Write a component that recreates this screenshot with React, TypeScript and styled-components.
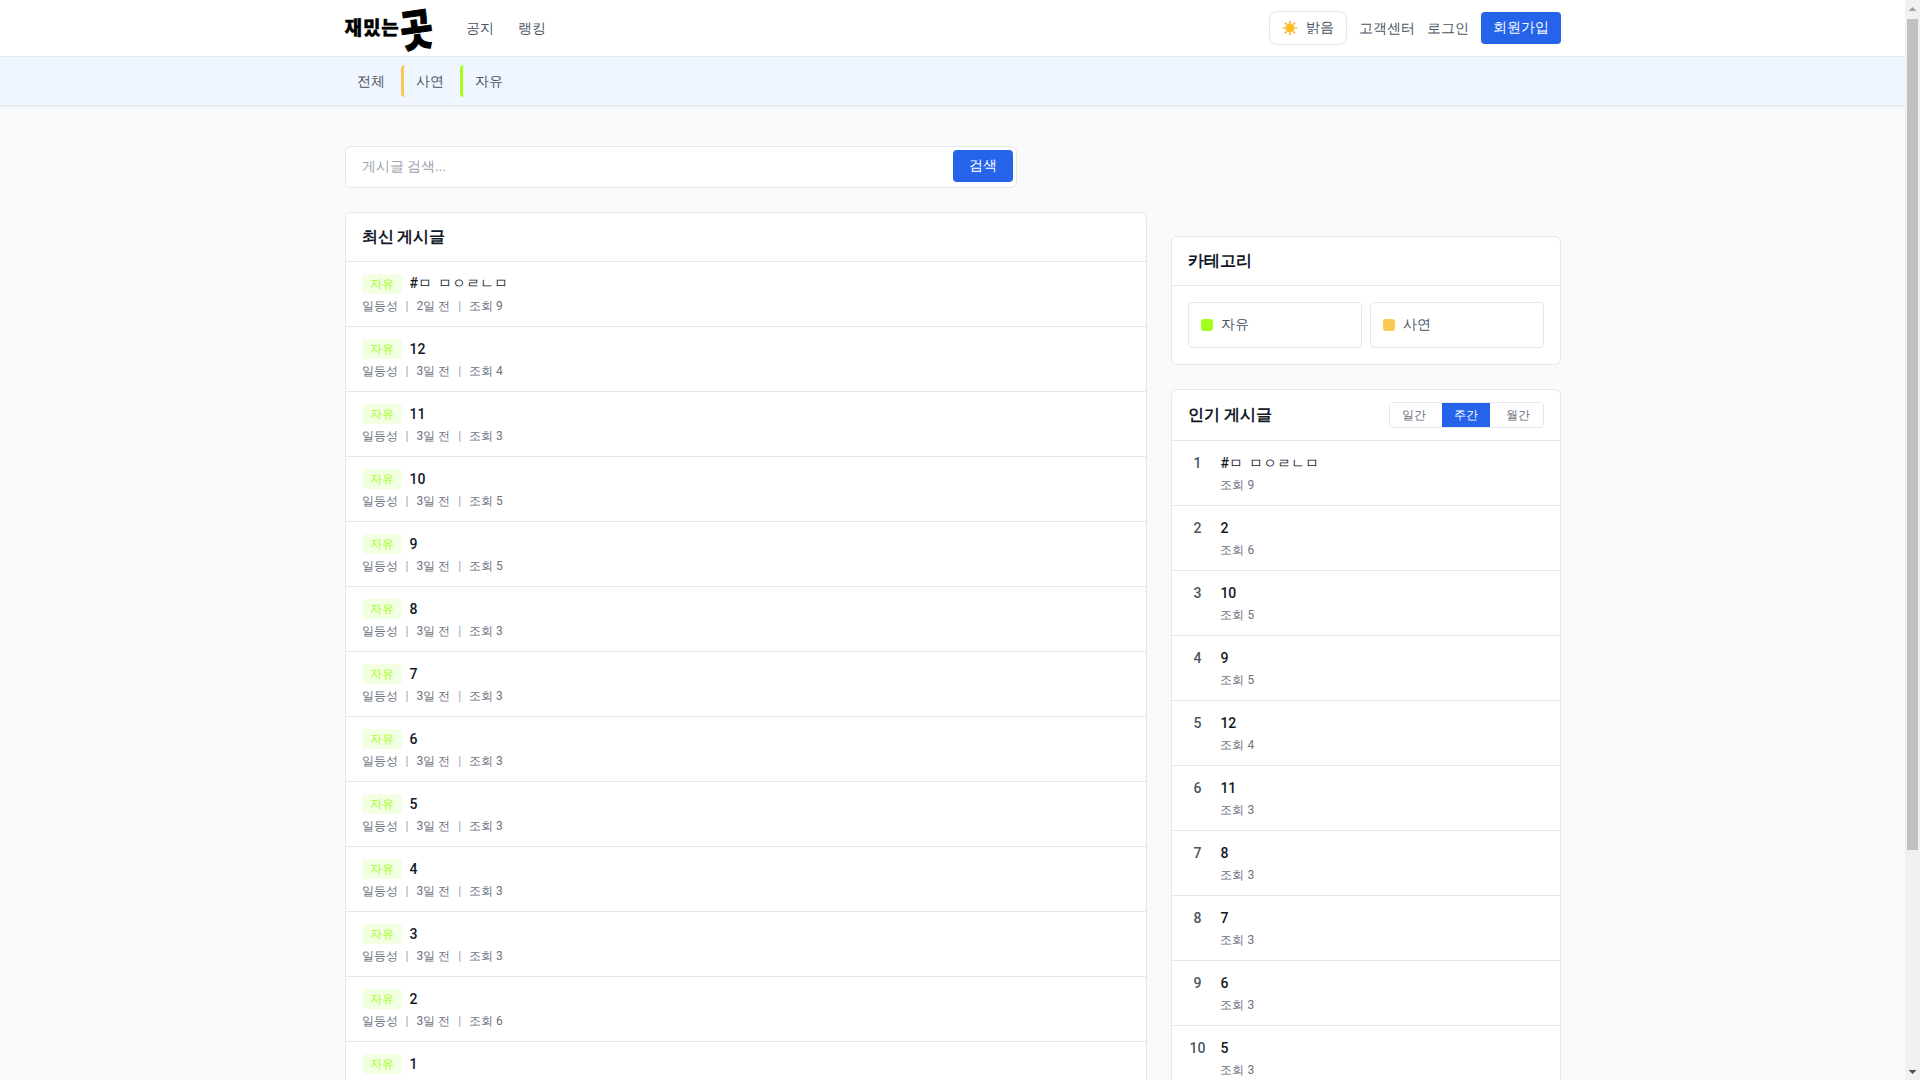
import React from "react";
import styled, { createGlobalStyle } from "styled-components";

const GlobalStyle = createGlobalStyle`
  * { box-sizing: border-box; }
  html, body { margin: 0; padding: 0; height: 100%; overflow: hidden; }
  body {
    background: #f9fafb;
    color: #111827;
    font-family: Roboto, sans-serif;
    font-size: 14px;
  }
`;

const Viewport = styled.div`
  display: flex;
  height: 100vh;
`;

const Scroller = styled.div`
  flex: 1;
  min-width: 0;
  overflow: hidden;
`;

const ScrollRail = styled.div`
  display: flex;
  flex-direction: column;
  width: 15px;
  background: #f1f1f1;
`;

const RailArrow = styled.svg`
  flex: none;
  display: block;
  width: 15px;
  height: 17px;
`;

const RailThumb = styled.div`
  width: 11px;
  height: 831px;
  margin: 2px 2px 0;
  background: #c1c1c1;
`;

const RailSpacer = styled.div`
  flex: 1;
`;

const Page = styled.div`
  background: #f9fafb;
`;

const Container = styled.div`
  width: 100%;
  max-width: 1280px;
  margin: 0 auto;
  padding: 0 32px;
`;

const TopBar = styled.header`
  height: 57px;
  background: #ffffff;
  border-bottom: 1px solid #e5e7eb;
`;

const TopInner = styled(Container)`
  display: flex;
  align-items: center;
  justify-content: space-between;
  height: 56px;
`;

const LeftGroup = styled.div`
  display: flex;
  align-items: center;
`;

const Logo = styled.a`
  display: flex;
  align-items: center;
  height: 44px;
  margin-bottom: 3px;
  color: #000000;
  font-family: "Noto Sans CJK KR", sans-serif;
  font-weight: 900;
  white-space: nowrap;
`;

const LogoSmall = styled.span`
  font-size: 19px;
  letter-spacing: 0.9px;
  -webkit-text-stroke: 0.3px #000000;
`;

const LogoBig = styled.span`
  font-size: 44px;
  line-height: 44px;
  margin-left: -4px;
  margin-right: -4px;
  -webkit-text-stroke: 1px #000000;
  transform: rotate(-8deg) scaleX(0.8);
  transform-origin: 50% 50%;
`;

const MainNav = styled.nav`
  display: flex;
  gap: 24px;
  margin-left: 34px;
`;

const NavLink = styled.a`
  color: #4b5563;
  font-size: 14px;
  line-height: 20px;
`;

const RightGroup = styled.div`
  display: flex;
  align-items: center;
  gap: 12px;
`;

const ThemeButton = styled.button`
  display: flex;
  align-items: center;
  gap: 8px;
  height: 34px;
  padding: 0 12px;
  background: #ffffff;
  border: 1px solid #e5e7eb;
  border-radius: 8px;
  color: #4b5563;
  font: inherit;
  font-size: 14px;
`;

const SignUp = styled.button`
  height: 32px;
  padding: 0 12px;
  background: #2563eb;
  border: 0;
  border-radius: 4px;
  color: #ffffff;
  font: inherit;
  font-size: 14px;
`;

const SubBar = styled.div`
  height: 49px;
  background: #eff6ff;
  border-bottom: 1px solid #e5e7eb;
  box-shadow: 0 1px 2px rgba(0, 0, 0, 0.05);
`;

const SubInner = styled(Container)`
  display: flex;
  align-items: center;
  height: 48px;
`;

const SubLink = styled.a<{ $bar?: string }>`
  display: flex;
  align-items: center;
  height: 32px;
  padding: 1px 12px 0;
  border-left: ${(p) => (p.$bar ? `3px solid ${p.$bar}` : "0")};
  border-radius: 4px;
  color: #4b5563;
  font-size: 14px;
  & + & { margin-left: 4px; }
`;

const Content = styled(Container)`
  padding-top: 40px;
`;

const SearchBox = styled.form`
  display: flex;
  align-items: center;
  justify-content: space-between;
  width: 672px;
  height: 42px;
  padding: 0 3px 0 16px;
  background: #ffffff;
  border: 1px solid #e5e7eb;
  border-radius: 6px;
`;

const Placeholder = styled.span`
  color: #9ca3af;
  font-size: 14px;
`;

const SearchButton = styled.button`
  width: 60px;
  height: 32px;
  margin-bottom: 2px;
  background: #2563eb;
  border: 0;
  border-radius: 4px;
  color: #ffffff;
  font: inherit;
  font-size: 14px;
`;

const Columns = styled.div`
  display: flex;
  justify-content: space-between;
  align-items: flex-start;
  margin-top: 24px;
`;

const MainCol = styled.main`
  width: 66%;
`;

const SideCol = styled.aside`
  width: 32%;
  margin-top: 24px;
  display: flex;
  flex-direction: column;
  gap: 24px;
`;

const Card = styled.section`
  background: #ffffff;
  border: 1px solid #e5e7eb;
  border-radius: 6px;
`;

const CardHead = styled.div<{ $h?: number }>`
  display: flex;
  align-items: center;
  justify-content: space-between;
  height: ${(p) => p.$h ?? 49}px;
  padding: 0 16px;
  border-bottom: 1px solid #e5e7eb;
`;

const CardTitle = styled.h2`
  margin: 0;
  color: #111827;
  font-size: 16px;
  line-height: 24px;
  font-weight: 700;
`;

const PostRow = styled.a`
  display: block;
  height: 65px;
  padding: 12px 16px 0;
  border-bottom: 1px solid #e5e7eb;
  &:last-child { border-bottom: 0; }
`;

const TitleLine = styled.div`
  display: flex;
  align-items: center;
  height: 20px;
`;

const Badge = styled.span`
  display: inline-flex;
  align-items: center;
  justify-content: center;
  width: 40px;
  height: 20px;
  margin-right: 8px;
  background: #f3ffe3;
  border-radius: 4px;
  color: #a3ff1a;
  font-size: 12px;
`;

const PostTitle = styled.span`
  color: #111827;
  font-size: 14px;
  font-weight: 500;
  word-spacing: 3px;
`;

const Meta = styled.div`
  display: flex;
  align-items: center;
  margin-top: 3px;
  height: 18px;
  color: #6b7280;
  font-size: 12px;
`;

const Sep = styled.span`
  margin: 0 8px;
  color: #9ca3af;
`;

const CategoryGrid = styled.div`
  display: grid;
  grid-template-columns: 1fr 1fr;
  gap: 8px;
  padding: 16px;
`;

const CategoryItem = styled.a`
  display: flex;
  align-items: center;
  gap: 8px;
  height: 46px;
  padding: 0 12px;
  border: 1px solid #e5e7eb;
  border-radius: 4px;
  color: #4b5563;
  font-size: 14px;
`;

const Dot = styled.span<{ $c: string }>`
  width: 12px;
  height: 12px;
  border-radius: 3px;
  background: ${(p) => p.$c};
`;

const Segments = styled.div`
  display: flex;
  height: 26px;
  border: 1px solid #e5e7eb;
  border-radius: 4px;
  overflow: hidden;
`;

const Segment = styled.button<{ $on?: boolean; $left?: number; $right?: number }>`
  padding: 0 ${(p) => p.$right ?? 12}px 0 ${(p) => p.$left ?? 12}px;
  border: 0;
  background: ${(p) => (p.$on ? "#2563eb" : "#ffffff")};
  color: ${(p) => (p.$on ? "#ffffff" : "#6b7280")};
  font: inherit;
  font-size: 12px;
`;

const RankRow = styled.a`
  display: flex;
  height: 65px;
  padding: 12px 16px 0;
  border-bottom: 1px solid #e5e7eb;
  &:last-child { border-bottom: 0; }
`;

const RankNum = styled.span`
  width: 18px;
  margin-right: 14px;
  text-align: center;
  color: #4b5563;
  font-size: 14px;
  font-weight: 500;
  line-height: 20px;
`;

const RankBody = styled.div`
  display: flex;
  flex-direction: column;
`;

const RankTitle = styled.span`
  color: #111827;
  font-size: 14px;
  line-height: 20px;
  font-weight: 500;
  word-spacing: 3px;
`;

const RankMeta = styled.span`
  margin-top: 3px;
  color: #6b7280;
  font-size: 12px;
  line-height: 18px;
`;

const JAMO = "#ㅁ ㅁㅇㄹㄴㅁ";

const posts: { t: string; age: number; v: number }[] = [
  { t: JAMO, age: 2, v: 9 },
  { t: "12", age: 3, v: 4 },
  { t: "11", age: 3, v: 3 },
  { t: "10", age: 3, v: 5 },
  { t: "9", age: 3, v: 5 },
  { t: "8", age: 3, v: 3 },
  { t: "7", age: 3, v: 3 },
  { t: "6", age: 3, v: 3 },
  { t: "5", age: 3, v: 3 },
  { t: "4", age: 3, v: 3 },
  { t: "3", age: 3, v: 3 },
  { t: "2", age: 3, v: 6 },
  { t: "1", age: 3, v: 3 },
];

const ranks: { t: string; v: number }[] = [
  { t: JAMO, v: 9 },
  { t: "2", v: 6 },
  { t: "10", v: 5 },
  { t: "9", v: 5 },
  { t: "12", v: 4 },
  { t: "11", v: 3 },
  { t: "8", v: 3 },
  { t: "7", v: 3 },
  { t: "6", v: 3 },
  { t: "5", v: 3 },
];

const SunIcon = () => (
  <svg width="16" height="16" viewBox="0 0 24 24" aria-hidden="true">
    <circle cx="12" cy="12" r="7" fill="#fbbf24" />
    <g fill="#f59e0b">
      <path d="M12 0l1.6 4h-3.2zM12 24l-1.6-4h3.2zM0 12l4-1.6v3.2zM24 12l-4 1.6v-3.2z" />
      <path d="M3.5 3.5l4 1.7-2.3 2.3zM20.5 20.5l-4-1.7 2.3-2.3zM20.5 3.5l-1.7 4-2.3-2.3zM3.5 20.5l1.7-4 2.3 2.3z" />
    </g>
  </svg>
);

export default function App() {
  return (
    <Viewport>
      <GlobalStyle />
      <Scroller>
        <Page>
          <TopBar>
            <TopInner>
              <LeftGroup>
                <Logo>
                  <LogoSmall>재밌는</LogoSmall>
                  <LogoBig>곳</LogoBig>
                </Logo>
                <MainNav>
                  <NavLink>공지</NavLink>
                  <NavLink>랭킹</NavLink>
                </MainNav>
              </LeftGroup>
              <RightGroup>
                <ThemeButton>
                  <SunIcon />
                  밝음
                </ThemeButton>
                <NavLink>고객센터</NavLink>
                <NavLink>로그인</NavLink>
                <SignUp>회원가입</SignUp>
              </RightGroup>
            </TopInner>
          </TopBar>
          <SubBar>
            <SubInner>
              <SubLink>전체</SubLink>
              <SubLink $bar="#fcc84f">사연</SubLink>
              <SubLink $bar="#a3ff1a">자유</SubLink>
            </SubInner>
          </SubBar>
          <Content>
            <SearchBox>
              <Placeholder>게시글 검색...</Placeholder>
              <SearchButton type="button">검색</SearchButton>
            </SearchBox>
            <Columns>
              <MainCol>
                <Card>
                  <CardHead>
                    <CardTitle>최신 게시글</CardTitle>
                  </CardHead>
                  {posts.map((p, i) => (
                    <PostRow key={i}>
                      <TitleLine>
                        <Badge>자유</Badge>
                        <PostTitle>{p.t}</PostTitle>
                      </TitleLine>
                      <Meta>
                        일등성<Sep>|</Sep>
                        {p.age}일 전<Sep>|</Sep>
                        조회 {p.v}
                      </Meta>
                    </PostRow>
                  ))}
                </Card>
              </MainCol>
              <SideCol>
                <Card>
                  <CardHead>
                    <CardTitle>카테고리</CardTitle>
                  </CardHead>
                  <CategoryGrid>
                    <CategoryItem>
                      <Dot $c="#a3ff1a" />
                      자유
                    </CategoryItem>
                    <CategoryItem>
                      <Dot $c="#fcc84f" />
                      사연
                    </CategoryItem>
                  </CategoryGrid>
                </Card>
                <Card>
                  <CardHead $h={51}>
                    <CardTitle>인기 게시글</CardTitle>
                    <Segments>
                      <Segment $right={16}>일간</Segment>
                      <Segment $on>주간</Segment>
                      <Segment $left={16} $right={13}>월간</Segment>
                    </Segments>
                  </CardHead>
                  {ranks.map((r, i) => (
                    <RankRow key={i}>
                      <RankNum>{i + 1}</RankNum>
                      <RankBody>
                        <RankTitle>{r.t}</RankTitle>
                        <RankMeta>조회 {r.v}</RankMeta>
                      </RankBody>
                    </RankRow>
                  ))}
                </Card>
              </SideCol>
            </Columns>
          </Content>
        </Page>
      </Scroller>
      <ScrollRail aria-hidden="true">
        <RailArrow viewBox="0 0 15 17">
          <path d="M3.5 11h8L7.5 7z" fill="#a3a3a3" />
        </RailArrow>
        <RailThumb />
        <RailSpacer />
        <RailArrow viewBox="0 0 15 17">
          <path d="M3.5 7h8L7.5 11z" fill="#505050" />
        </RailArrow>
      </ScrollRail>
    </Viewport>
  );
}
